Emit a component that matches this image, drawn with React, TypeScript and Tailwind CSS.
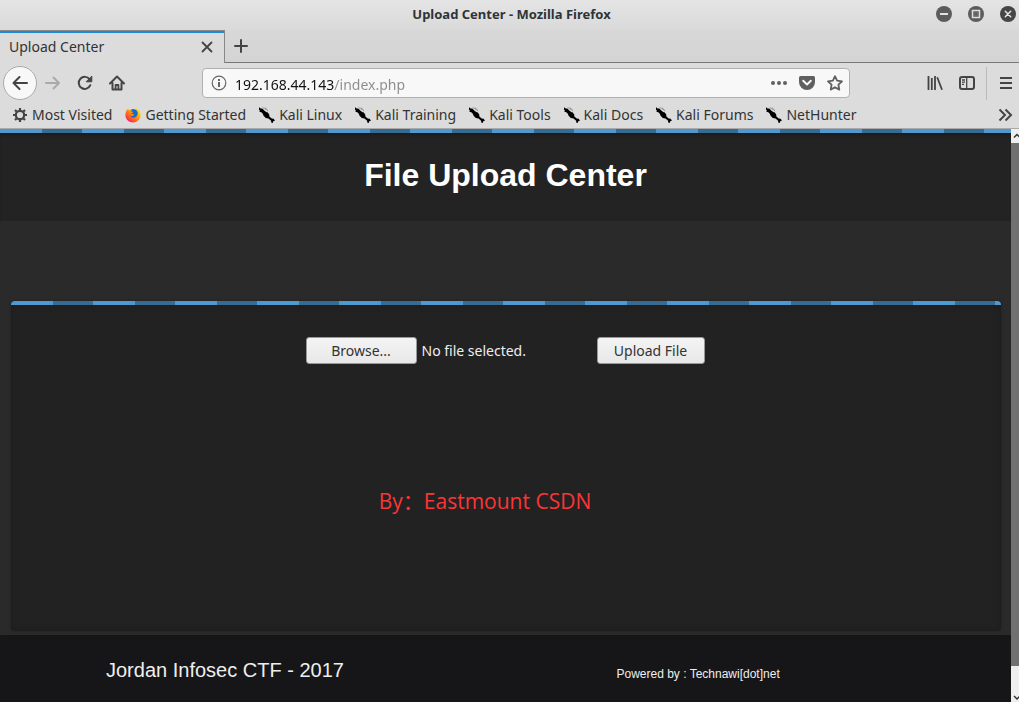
import { useRef, useState } from "react";
import type { ReactNode } from "react";

const UI_FONT = "font-['Noto_Sans','Open_Sans',sans-serif]";
const STRIPES =
  "bg-[repeating-linear-gradient(90deg,#4f99d3_0_42px,#376b92_42px_82px)]";

type IconProps = { className?: string };

function KaliIcon() {
  return (
    <svg viewBox="0 0 16 16" className="size-4 shrink-0" fill="#000" aria-hidden="true">
      <path d="M0 0l1 1.200 2.600.6L5.200 3.500l2 1.500 1.600.6 1.400 2 .2 1.900 2.300 2 1.900.2L16 13.600l-1.700.7-.6 1.700-1.500-.6-.1-1.700-2.600-2.100L6.800 11 4.600 8.800 3.800 6.800 2.300 5.300.3 4.800l.6-1L0 2.600z" />
      <path d="M3.500.8c2 .1 3.200.9 4 2.500M6 .9c1.500.6 2.400 1.900 2.700 3.300" stroke="#555" strokeWidth=".5" fill="none" />
    </svg>
  );
}

function GearIcon() {
  return (
    <svg viewBox="0 0 16 16" className="size-4 shrink-0" fill="none" stroke="#444" aria-hidden="true">
      <circle cx="8" cy="8" r="4.200" strokeWidth="2.200" />
      <path strokeWidth="2.200" d="M8 3.500V1M8 12.500V15M3.500 8H1M12.500 8H15M4.800 4.800L3 3M11.200 11.200L13 13M4.800 11.200L3 13M11.200 4.800L13 3" />
    </svg>
  );
}

function FirefoxIcon() {
  return (
    <svg viewBox="0 0 16 16" className="size-4 shrink-0" aria-hidden="true">
      <defs>
        <linearGradient id="fox" x1="1" y1="0" x2=".15" y2="1">
          <stop offset="0" stopColor="#fff44f" />
          <stop offset=".35" stopColor="#ffbd00" />
          <stop offset=".65" stopColor="#ff6a1a" />
          <stop offset="1" stopColor="#f0146c" />
        </linearGradient>
      </defs>
      <circle cx="8.200" cy="7.500" r="5.500" fill="#1769d4" />
      <path fill="url(#fox)" d="M10 .5c1 .9 1.300 1.700 1.400 2.500 1.500 1.500 1.700 3.200 1.100 4.800-.7 2-2.300 3-4.200 2.800-1.500-.1-2.400-.9-2.900-1.900 1.200.6 2.100.4 2.900-.2.700-.5 1-.6.6-1.100-.8-.8-1.900.1-2.800-.7l1.800-1.200.1-.8-2.100-.3c.2-.9.8-1.500 1.500-1.900-1.400-.1-2.400.3-3.200 1.100-.8-.4-.9-1.200-.8-2C1.400 3 .4 5.300.4 8.100c0 4.200 3.400 7.500 7.600 7.500s7.600-3.300 7.600-7.500c0-2-.6-3.700-1.500-4.800-.1-.4-.2-.7-.5-1l-.1.900C12.500 1.900 11.300.9 10 .5z" />
    </svg>
  );
}

function Stroke({ children, className = "size-4" }: IconProps & { children: ReactNode }) {
  return (
    <svg viewBox="0 0 16 16" className={className} fill="none" stroke="currentColor" strokeWidth="2" strokeLinecap="round" strokeLinejoin="round" aria-hidden="true">
      {children}
    </svg>
  );
}

function IconButton({ label, className = "", children }: { label: string; className?: string; children: ReactNode }) {
  return (
    <button type="button" aria-label={label} className={`flex shrink-0 items-center justify-center ${className}`}>
      {children}
    </button>
  );
}

function TitleBar() {
  return (
    <header className="grid h-[30px] grid-cols-[1fr_auto_1fr] items-center bg-linear-to-b from-[#e4e4e4] to-[#dadada] pb-[2px]">
      <span className="col-start-2 pl-1 text-[13px] leading-5 font-bold text-[#2e3436]">Upload Center - Mozilla Firefox</span>
      <div className="flex justify-end gap-4 pr-[3px]">
        <IconButton label="Minimize" className="size-4 rounded-full bg-[#5c5c5c] text-[#e4e4e4]">
          <Stroke><path strokeLinecap="butt" d="M4 8h8" /></Stroke>
        </IconButton>
        <IconButton label="Maximize" className="size-4 rounded-full bg-[#5c5c5c] text-[#dedede]">
          <Stroke><path strokeWidth="1.500" strokeLinejoin="miter" d="M4.500 4.500h7v7h-7z" /><path strokeWidth="1" d="M6.500 6.500h3v3h-3z" opacity=".15" /></Stroke>
        </IconButton>
        <IconButton label="Close window" className="size-4 rounded-full bg-[#454545] text-[#e4e4e4]">
          <Stroke><path strokeWidth="1.500" d="M5.300 5.300l5.400 5.400M10.700 5.300l-5.400 5.400" /></Stroke>
        </IconButton>
      </div>
    </header>
  );
}

function TabStrip() {
  return (
    <div className="flex h-[33px] bg-linear-to-b from-[#d8d8d8] to-[#d4d4d4]">
      <div className="flex w-[225px] items-center border-t border-r border-[#888] bg-[#dcdcdc]">
        <div className="flex h-full w-full items-center justify-between border-t-2 border-[#1b8ad3] pr-[9px] pb-[2px] pl-[9px]">
          <span className="text-[14px] leading-5 text-[#333]">Upload Center</span>
          <IconButton label="Close tab" className="size-4 text-[#444]">
            <Stroke><path strokeWidth="1.800" d="M3.500 3.500l9 9M12.500 3.500l-9 9" /></Stroke>
          </IconButton>
        </div>
      </div>
      <div className="flex flex-1 items-center border-b border-[#777] pl-2">
        <IconButton label="New tab" className="size-4 text-[#444]">
          <Stroke><path d="M8 2v12M2 8h12" /></Stroke>
        </IconButton>
      </div>
    </div>
  );
}

function Toolbar() {
  const [url, setUrl] = useState("192.168.44.143/index.php");
  return (
    <nav className="flex h-10 items-center bg-[#dcdcdc] pl-[3px] text-[#444]" aria-label="Navigation">
      <IconButton label="Back" className="size-[34px] rounded-full border border-[#aaa] bg-[#f8f8f8]">
        <Stroke><path d="M15 8H1.500M7.500 2L1.500 8l6 6" /></Stroke>
      </IconButton>
      <IconButton label="Forward" className="w-8 text-[#aaa]">
        <Stroke><path d="M1 8h13M8.500 2.500L14 8l-5.500 5.500" /></Stroke>
      </IconButton>
      <IconButton label="Reload" className="w-8">
        <Stroke><path d="M13.300 10.200A6 6 0 1 1 12.600 4.300" /><path fill="currentColor" strokeWidth="1" d="M14.800 1.500v5.300H9.500z" /></Stroke>
      </IconButton>
      <IconButton label="Home" className="w-8">
        <Stroke><path d="M1 8.500L8 1.500l7 7M3.500 8v6.500h9V8" /><path strokeWidth="1.800" d="M6.600 14v-4h2.800v4" /></Stroke>
      </IconButton>
      <div className="mr-[69px] ml-[69px] flex h-[30px] flex-1 items-center rounded-[4px] border border-[#b0b0b0] bg-[#f8f8f8] pr-[6px] pl-2">
        <IconButton label="Site information" className="size-4 text-[#666]">
          <Stroke><circle cx="8" cy="8" r="6.800" strokeWidth="1.200" /><path strokeLinecap="butt" d="M8 7v5M8 4v2" /></Stroke>
        </IconButton>
        <input
          aria-label="Address"
          value={url}
          onChange={(event) => setUrl(event.target.value)}
          className="ml-2 h-[26px] min-w-0 flex-1 bg-[linear-gradient(90deg,#111_0_99px,#8c8c8c_99px)] bg-clip-text pt-[2px] text-[14px] leading-6 text-transparent caret-black outline-none"
        />
        <div className="flex gap-3 text-[#606060]">
          <IconButton label="Page actions">
            <svg viewBox="0 0 16 16" className="size-4" fill="currentColor" aria-hidden="true"><circle cx="2" cy="8" r="2" /><circle cx="8" cy="8" r="2" /><circle cx="14" cy="8" r="2" /></svg>
          </IconButton>
          <IconButton label="Save to Pocket">
            <svg viewBox="0 0 16 16" className="size-4" aria-hidden="true"><path fill="currentColor" d="M1.500 1h13Q16 1 16 2.500V7a8 8 0 0 1-16 0V2.500Q0 1 1.500 1z" /><path d="M4.200 5.800L8 9.400l3.800-3.600" fill="none" stroke="#f8f8f8" strokeWidth="2" strokeLinecap="round" strokeLinejoin="round" /></svg>
          </IconButton>
          <IconButton label="Bookmark this page">
            <Stroke><path strokeWidth="1.800" d="M8 1.200l2.100 4.500 4.900.6-3.600 3.400.9 4.900L8 12.200l-4.300 2.400.9-4.900L1 6.300l4.900-.6z" /></Stroke>
          </IconButton>
        </div>
      </div>
      <IconButton label="Library" className="w-8">
        <svg viewBox="0 0 16 16" className="size-4" fill="none" stroke="currentColor" strokeWidth="1.800" aria-hidden="true"><path d="M1.500 1v14M4.800 3v12M8 1v14M10.200 2.200l4.800 12.500" /></svg>
      </IconButton>
      <IconButton label="Sidebars" className="w-8">
        <Stroke><rect x="1" y="2" width="14" height="12" rx="2" /><path strokeWidth="1.300" strokeLinecap="butt" d="M7.700 2v12M3 5h3M3 7.200h3M3 9.400h2" /></Stroke>
      </IconButton>
      <div className="ml-[3px] h-[33px] border-l border-[#bbb]" />
      <IconButton label="Open menu" className="w-8 pl-[6px]">
        <Stroke className="size-4"><path strokeLinecap="butt" d="M2 3h12M2 8h12M2 13h12" /></Stroke>
      </IconButton>
    </nav>
  );
}

const bookmarks = [
  { label: "Most Visited", icon: <GearIcon /> },
  { label: "Getting Started", icon: <FirefoxIcon /> },
  { label: "Kali Linux", icon: <KaliIcon /> },
  { label: "Kali Training", icon: <KaliIcon /> },
  { label: "Kali Tools", icon: <KaliIcon /> },
  { label: "Kali Docs", icon: <KaliIcon /> },
  { label: "Kali Forums", icon: <KaliIcon /> },
  { label: "NetHunter", icon: <KaliIcon /> },
];

function BookmarksBar() {
  return (
    <nav className="flex h-[26px] items-center border-b border-[#aaa] bg-[#dcdcdc] pr-[6px] pb-[2px] pl-3" aria-label="Bookmarks">
      <ul className="flex flex-1 gap-[13px]">
        {bookmarks.map(({ label, icon }) => (
          <li key={label}>
            <a href="#" className="flex items-center gap-1 text-[14px] leading-5 whitespace-nowrap text-[#333]">
              {icon}
              {label}
            </a>
          </li>
        ))}
      </ul>
      <IconButton label="More bookmarks" className="text-[#444]">
        <Stroke><path strokeLinecap="butt" strokeLinejoin="miter" d="M2.500 2.500L8 8l-5.500 5.500M8.500 2.500L14 8l-5.500 5.500" /></Stroke>
      </IconButton>
    </nav>
  );
}

function UploadPanel() {
  const fileInput = useRef<HTMLInputElement>(null);
  const [fileName, setFileName] = useState("No file selected.");
  const button =
    "h-[27px] rounded-[3px] border border-[#999] bg-linear-to-b from-[#f4f4f4] to-[#e8e8e8] text-[14px] leading-5 text-[#333]";
  return (
    <section className="mr-[10px] mt-20 ml-[11px] flex flex-1 flex-col overflow-hidden rounded-[4px] bg-[#222223] shadow-[0_0_3px_#202020]">
      <div className={`h-1 ${STRIPES}`} />
      <div className="flex-1 shadow-[inset_0_0_6px_#1c1c1c]">
        <form className={`flex items-center justify-center pt-8 pr-[2px] ${UI_FONT}`} onSubmit={(event) => event.preventDefault()}>
          <input
            ref={fileInput}
            type="file"
            aria-label="File to upload"
            className="hidden"
            onChange={(event) => setFileName(event.target.files?.[0]?.name ?? "No file selected.")}
          />
          <button type="button" className={`${button} w-[111px]`} onClick={() => fileInput.current?.click()}>Browse...</button>
          <span className="ml-[5px] w-[175px] text-[14px] leading-5 text-[#eee]">{fileName}</span>
          <button type="submit" className={`${button} w-[108px]`}>Upload File</button>
        </form>
        <p lang="zh-CN" className="pt-[122px] pr-[42px] text-center font-['Open_Sans','Noto_Sans_CJK_SC',sans-serif] text-[21px] leading-[30px] text-[#fb3536]">By：Eastmount CSDN</p>
      </div>
    </section>
  );
}

function ScrollBar() {
  return (
    <div className="flex w-2 flex-col overflow-hidden bg-[#eee]" aria-hidden="true">
      <svg viewBox="0 0 8 14" className="h-[14px] w-2" fill="none" stroke="#333" strokeWidth="1.500"><path d="M3 8.500l3-3 3 3" /></svg>
      <div className="flex-1 bg-[#707070]" />
      <svg viewBox="0 0 8 36" className="h-9 w-2" fill="none" stroke="#333" strokeWidth="1.500"><path d="M3 30l3 3 3-3" /></svg>
    </div>
  );
}

export default function App() {
  return (
    <div className={`flex min-h-screen flex-col ${UI_FONT}`}>
      <TitleBar />
      <TabStrip />
      <Toolbar />
      <BookmarksBar />
      <div className="flex flex-1">
        <main className="flex flex-1 flex-col bg-[#2a2a2b] font-['Liberation_Sans',Arial,sans-serif]">
          <div className={`h-1 ${STRIPES}`} />
          <div className="bg-[#232324] pt-5 pb-6 text-center shadow-[inset_0_3px_3px_-1px_#1b1b1b]">
            <h1 className="text-[32px] leading-[44px] font-bold text-white">File Upload Center</h1>
          </div>
          <UploadPanel />
          <footer className="mt-1 grid h-[67px] grid-cols-2 items-center bg-[#161618] pl-[106px] text-[#eee]">
            <p className="pt-[2px] text-[20px] leading-6">Jordan Infosec CTF - 2017</p>
            <p className="pt-[10px] pl-[58px] text-[12px] leading-4">Powered by : Technawi[dot]net</p>
          </footer>
        </main>
        <ScrollBar />
      </div>
    </div>
  );
}
